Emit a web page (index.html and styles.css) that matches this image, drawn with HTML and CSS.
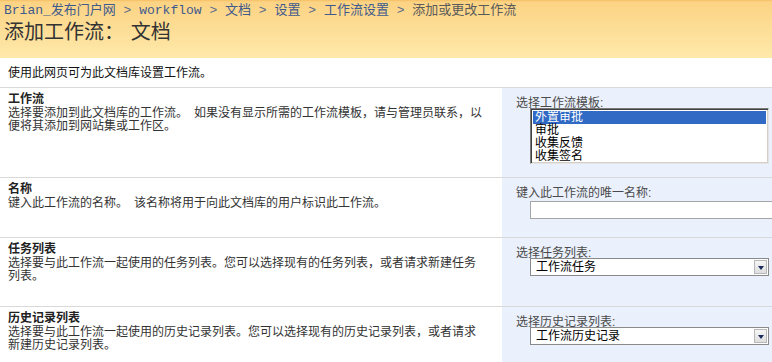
FILE: index.html
```html
<!DOCTYPE html>
<html lang="zh-CN">
<head>
<meta charset="utf-8">
<title>添加工作流</title>
<link rel="stylesheet" href="styles.css">
</head>
<body>
<div class="header">
  <div class="crumbs"><a class="crumb">Brian_发布门户网</a><span class="sep"> &gt; </span><a class="crumb">workflow</a><span class="sep"> &gt; </span><a class="crumb">文档</a><span class="sep"> &gt; </span><a class="crumb">设置</a><span class="sep"> &gt; </span><a class="crumb">工作流设置</a><span class="sep"> &gt; </span><span class="current">添加或更改工作流</span></div>
  <h1 class="title">添加工作流：&#8196;文档</h1>
</div>
<p class="intro">使用此网页可为此文档库设置工作流。</p>
<div class="form">
  <div class="row row-workflow">
    <div class="info">
      <div class="heading">工作流</div>
      <div class="desc">选择要添加到此文档库的工作流。&#8194;如果没有显示所需的工作流模板，请与管理员联系，以便将其添加到网站集或工作区。</div>
    </div>
    <div class="ctrl">
      <div class="label">选择工作流模板:</div>
      <div class="listbox">
        <div class="opt selected">外置审批</div>
        <div class="opt">审批</div>
        <div class="opt">收集反馈</div>
        <div class="opt">收集签名</div>
      </div>
    </div>
  </div>
  <div class="row row-name">
    <div class="info">
      <div class="heading">名称</div>
      <div class="desc">键入此工作流的名称。&#8194;该名称将用于向此文档库的用户标识此工作流。</div>
    </div>
    <div class="ctrl">
      <div class="label">键入此工作流的唯一名称:</div>
      <div class="textbox"></div>
    </div>
  </div>
  <div class="row row-task">
    <div class="info">
      <div class="heading">任务列表</div>
      <div class="desc">选择要与此工作流一起使用的任务列表。您可以选择现有的任务列表，或者请求新建任务列表。</div>
    </div>
    <div class="ctrl">
      <div class="label">选择任务列表:</div>
      <div class="dropdown"><span class="dd-text">工作流任务</span><span class="dd-btn"><span class="dd-arrow"></span></span></div>
    </div>
  </div>
  <div class="row row-history">
    <div class="info">
      <div class="heading">历史记录列表</div>
      <div class="desc">选择要与此工作流一起使用的历史记录列表。您可以选择现有的历史记录列表，或者请求新建历史记录列表。</div>
    </div>
    <div class="ctrl">
      <div class="label">选择历史记录列表:</div>
      <div class="dropdown"><span class="dd-text">工作流历史记录</span><span class="dd-btn"><span class="dd-arrow"></span></span></div>
    </div>
  </div>
</div>
</body>
</html>
```
FILE: styles.css
```css
html, body {
  margin: 0;
  padding: 0;
  overflow: hidden;
  background: #fff;
}
body {
  font-family: "Liberation Sans", "Noto Sans CJK SC", sans-serif;
  font-size: 12px;
  color: #222;
}
.header {
  height: 58px;
  box-sizing: border-box;
  padding: 3px 4px 0;
  background: linear-gradient(#f3c066 0px, #fcd384 2px, #fee9aa 58px);
}
.crumbs {
  font-family: "Liberation Mono", "Noto Sans CJK SC", monospace;
  font-size: 13px;
  line-height: 15px;
  white-space: nowrap;
  color: #5b6b8c;
}
.crumb {
  color: #3f5a8c;
}
.current {
  color: #5a5a5a;
}
.title {
  margin: 3px 0 0;
  font-family: "Liberation Sans", "Noto Sans CJK SC", sans-serif;
  font-size: 20px;
  font-weight: normal;
  line-height: 22px;
  color: #333;
}
.intro {
  margin: 8px 0 7px 8px;
  line-height: 14px;
  color: #111;
}
.row {
  display: grid;
  grid-template-columns: 502px 1fr;
  border-top: 1px solid #d9d9d9;
  box-sizing: border-box;
}
.row-workflow { height: 90px; }
.row-name { height: 60px; }
.row-task { height: 69px; }
.row-history { height: 70px; }
.info {
  padding: 4px 18px 0 8px;
}
.heading {
  font-weight: bold;
  line-height: 14px;
  color: #222;
}
.desc {
  margin-top: 1px;
  line-height: 13px;
  color: #333;
}
.ctrl {
  background: #ebf1fc;
  padding: 9px 0 0 14px;
}
.label {
  line-height: 12px;
  color: #4a4a4a;
  white-space: nowrap;
}
.listbox {
  margin-left: 14px;
  margin-top: -1px;
  width: 239px;
  height: 56px;
  box-sizing: border-box;
  background: #fff;
  border: 1px solid;
  border-color: #7a7a7a #e4e4e4 #e4e4e4 #7a7a7a;
  box-shadow: inset 1px 1px 0 #404040, inset -1px -1px 0 #d4d0c8;
  padding: 2px 2px 0 2px;
  overflow: hidden;
}
.opt {
  height: 13px;
  line-height: 13px;
  padding-left: 2px;
  color: #000;
  white-space: nowrap;
}
.opt.selected {
  background: #316ac5;
  color: #fff;
}
.textbox {
  margin: 2px 0 0 14px;
  width: 260px;
  height: 18px;
  box-sizing: border-box;
  background: #fff;
  border: 1px solid #a5a5a5;
}
.dropdown {
  margin-left: 14px;
  margin-top: -1px;
  width: 239px;
  height: 18px;
  box-sizing: border-box;
  background: #fff;
  border: 1px solid #8a8a8a;
  display: flex;
  align-items: center;
  justify-content: space-between;
  padding: 0 1px 0 5px;
}
.dd-text {
  line-height: 16px;
  color: #000;
  white-space: nowrap;
}
.dd-btn {
  width: 13px;
  height: 14px;
  box-sizing: border-box;
  border: 1px solid #b8b8b8;
  background: linear-gradient(#f6f6f6, #dedede);
  display: flex;
  align-items: center;
  justify-content: center;
}
.dd-arrow {
  width: 0;
  height: 0;
  border-left: 3px solid transparent;
  border-right: 3px solid transparent;
  border-top: 4px solid #1c2a5c;
  margin-top: 1px;
}
```
